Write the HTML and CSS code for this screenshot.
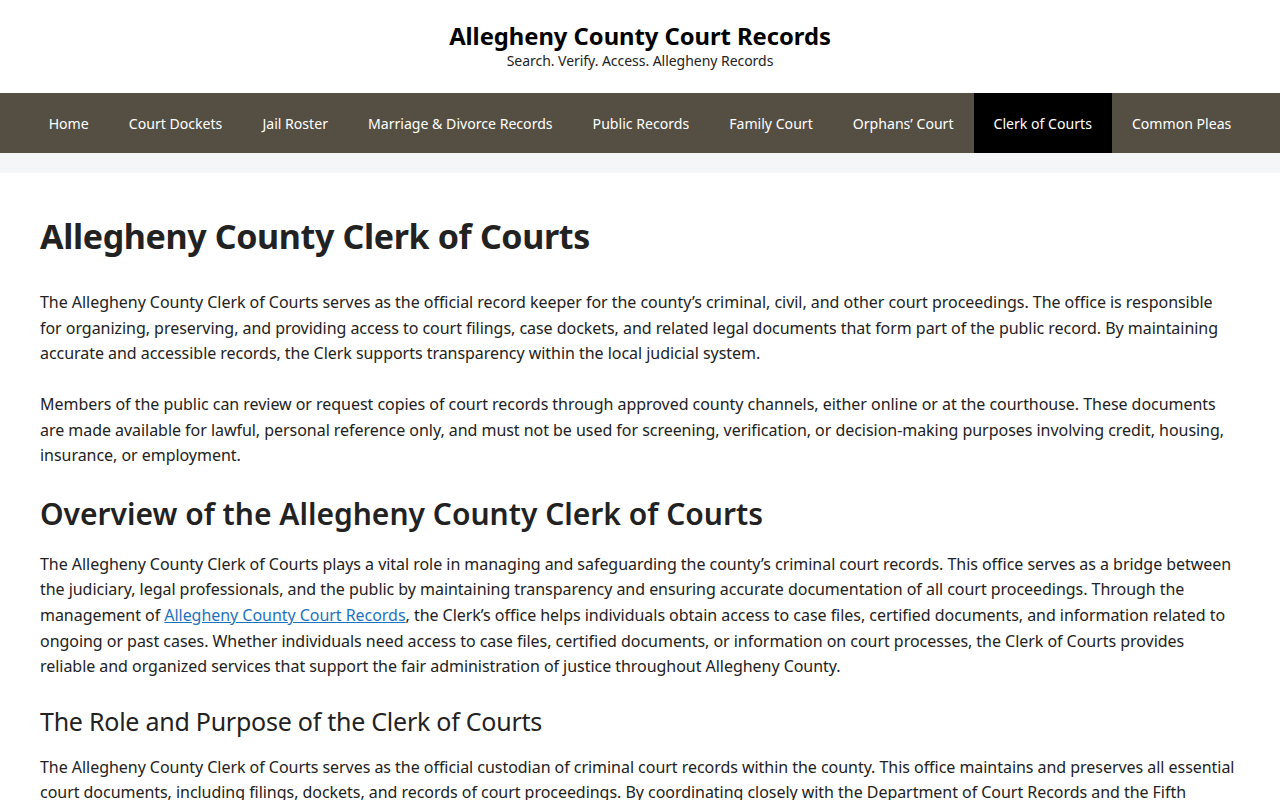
FILE: index.html
```html
<!DOCTYPE html>
<html lang="en">
<head>
  <meta charset="UTF-8">
  <meta name="viewport" content="width=device-width, initial-scale=1.0">
  <title>Allegheny County Clerk of Courts</title>
  <link rel="stylesheet" href="styles.css">
</head>
<body>
  <header class="site-header">
    <p class="site-title">Allegheny County Court Records</p>
    <p class="site-tagline">Search. Verify. Access. Allegheny Records</p>
  </header>

  <nav class="main-nav">
    <a href="#">Home</a>
    <a href="#">Court Dockets</a>
    <a href="#">Jail Roster</a>
    <a href="#">Marriage &amp; Divorce Records</a>
    <a href="#">Public Records</a>
    <a href="#">Family Court</a>
    <a href="#">Orphans’ Court</a>
    <a href="#" class="active">Clerk of Courts</a>
    <a href="#">Common Pleas</a>
  </nav>

  <div class="nav-gap"></div>

  <main class="content">
    <h1>Allegheny County Clerk of Courts</h1>

    <p>The Allegheny County Clerk of Courts serves as the official record keeper for the county’s criminal, civil, and other court proceedings. The office is responsible for organizing, preserving, and providing access to court filings, case dockets, and related legal documents that form part of the public record. By maintaining accurate and accessible records, the Clerk supports transparency within the local judicial system.</p>

    <p>Members of the public can review or request copies of court records through approved county channels, either online or at the courthouse. These documents are made available for lawful, personal reference only, and must not be used for screening, verification, or decision-making purposes involving credit, housing, insurance, or employment.</p>

    <h2>Overview of the Allegheny County Clerk of Courts</h2>

    <p>The Allegheny County Clerk of Courts plays a vital role in managing and safeguarding the county’s criminal court records. This office serves as a bridge between the judiciary, legal professionals, and the public by maintaining transparency and ensuring accurate documentation of all court proceedings. Through the management of <a href="#">Allegheny County Court Records</a>, the Clerk’s office helps individuals obtain access to case files, certified documents, and information related to ongoing or past cases. Whether individuals need access to case files, certified documents, or information on court processes, the Clerk of Courts provides reliable and organized services that support the fair administration of justice throughout Allegheny County.</p>

    <h3>The Role and Purpose of the Clerk of Courts</h3>

    <p>The Allegheny County Clerk of Courts serves as the official custodian of criminal court records within the county. This office maintains and preserves all essential court documents, including filings, dockets, and records of court proceedings. By coordinating closely with the Department of Court Records and the Fifth Judicial District, the Clerk ensures that every record is complete, accurate, and available to those who need it.</p>
  </main>
</body>
</html>
```

FILE: styles.css
```css
body {
  margin: 0;
  font-family: "Noto Sans", "Open Sans", sans-serif;
  color: #222222;
  background-color: #ffffff;
}

.site-header {
  height: 93px;
  display: flex;
  flex-direction: column;
  align-items: center;
  justify-content: center;
  text-align: center;
}

.site-title {
  margin: 0;
  font-size: 23.8px;
  font-weight: bold;
  color: #000000;
  line-height: 1.2;
}

.site-tagline {
  margin: 0;
  font-size: 14px;
  color: #222222;
  line-height: 1.4;
}

.main-nav {
  display: flex;
  justify-content: center;
  background-color: #554f43;
}

.main-nav a {
  display: block;
  padding: 1px 20px 0;
  line-height: 59px;
  font-size: 14.1px;
  color: #ffffff;
  text-decoration: none;
}

.main-nav a.active {
  background-color: #000000;
}

.nav-gap {
  height: 20px;
  background-color: #f5f6f8;
}

.content {
  padding: 41px 44px 20px 40px;
}

h1 {
  margin: 0 0 32px;
  font-size: 34px;
  letter-spacing: -0.36px;
  font-weight: bold;
  line-height: 1.3;
}

h2 {
  margin: 27px 0 20px;
  font-size: 30px;
  font-weight: 600;
  line-height: 1.2;
}

h3 {
  margin: 26px 0 19px;
  font-size: 25px;
  letter-spacing: -0.25px;
  font-weight: normal;
  line-height: 1.2;
}

p {
  margin: 0 0 25px;
  font-size: 16px;
  letter-spacing: -0.04px;
  line-height: 1.6;
}

p a {
  color: #1e73be;
}
```
